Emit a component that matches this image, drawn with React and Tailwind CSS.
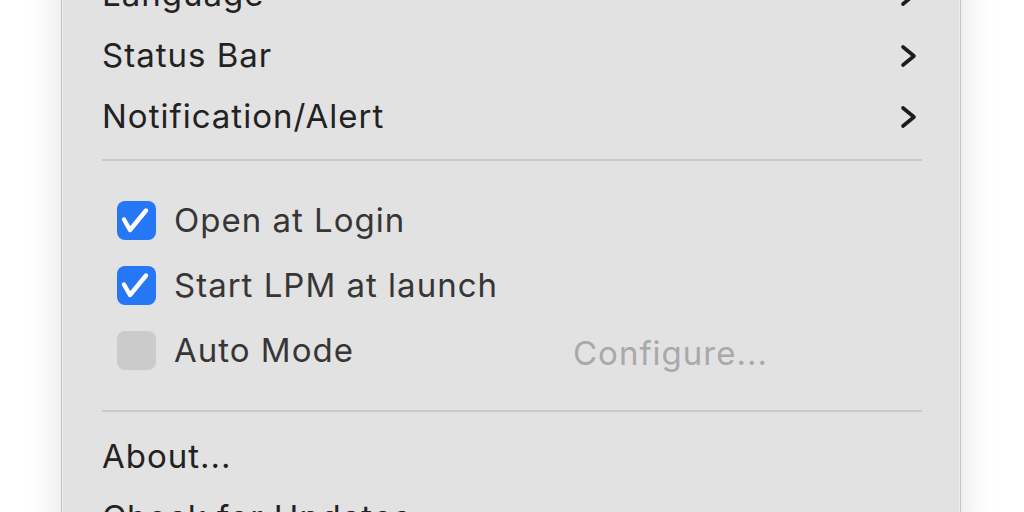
const font = { fontFamily: "Inter, 'Noto Sans', sans-serif" };

function Chevron() {
  return (
    <svg width="18" height="24" viewBox="0 0 18 24" className="mr-[2px]">
      <polyline
        points="3,3 14,12 3,21"
        fill="none"
        stroke="#1c1c1c"
        strokeWidth="3.6"
        strokeLinecap="round"
        strokeLinejoin="round"
      />
    </svg>
  );
}

function SubmenuItem({ label }) {
  return (
    <div className="flex h-[61px] items-center justify-between pr-[2px]">
      <span className="text-[33px] leading-[61px] tracking-[1px] text-[#222222]">{label}</span>
      <Chevron />
    </div>
  );
}

function Checkbox({ checked }) {
  if (!checked) {
    return <div className="h-[39px] w-[39px] shrink-0 rounded-[8px] bg-[#cbcbcb]" />;
  }
  return (
    <div className="flex h-[39px] w-[39px] shrink-0 items-center justify-center rounded-[8px] bg-[#2677f6]">
      <svg width="39" height="39" viewBox="0 0 39 39">
        <polyline
          points="7,18.5 13,29 29,9.5"
          fill="none"
          stroke="white"
          strokeWidth="4.4"
          strokeLinecap="round"
          strokeLinejoin="round"
        />
      </svg>
    </div>
  );
}

function CheckRow({ label, checked, extra }) {
  return (
    <div className="flex h-[65px] items-center pl-[15px]">
      <Checkbox checked={checked} />
      <span className="ml-[18px] w-[399px] text-[33px] leading-[65px] tracking-[1px] text-[#363636]">
        {label}
      </span>
      {extra && (
        <span className="mt-[6px] text-[33px] leading-[65px] tracking-[1px] text-[#a9a9a9]">{extra}</span>
      )}
    </div>
  );
}

function Separator() {
  return <div className="h-[2px] bg-[#c9c9c9]" />;
}

export default function App() {
  return (
    <div className="h-[512px] w-[1024px] overflow-hidden bg-white" style={font}>
      <div className="ml-[61px] -mt-[37px] w-[900px] rounded-b-[12px] border border-[#c4c4c4] bg-[#e2e2e2] pl-[40px] pr-[38px] shadow-[inset_0_0_0_1px_#eeeeee,0_0_36px_rgba(0,0,0,0.13)]">
        <SubmenuItem label="Language" />
        <SubmenuItem label="Status Bar" />
        <SubmenuItem label="Notification/Alert" />

        <div className="pb-[27px] pt-[12px]">
          <Separator />
        </div>

        <CheckRow label="Open at Login" checked />
        <CheckRow label="Start LPM at launch" checked />
        <CheckRow label="Auto Mode" extra="Configure..." />

        <div className="pb-[14px] pt-[27px]">
          <Separator />
        </div>

        <div className="h-[61px] text-[33px] leading-[61px] tracking-[1px] text-[#222222]">About...</div>
        <div className="h-[61px] text-[33px] leading-[61px] tracking-[1px] text-[#222222]">Check for Updates</div>
      </div>
    </div>
  );
}
